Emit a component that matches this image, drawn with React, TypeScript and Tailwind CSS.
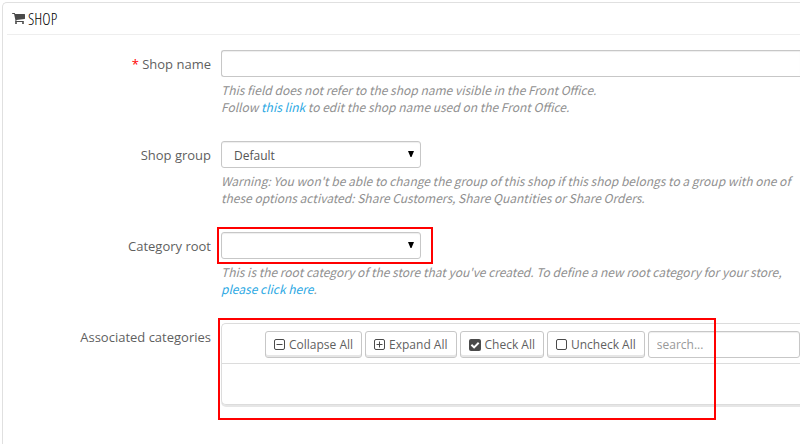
import React from "react";

type FormRowProps = {
  id: string;
  label: string;
  required?: boolean;
  children: React.ReactNode;
};

function FormRow({ id, label, required, children }: FormRowProps) {
  return (
    <div className="flex items-start gap-[10px]">
      <label htmlFor={id} className="w-[204px] shrink-0 text-right text-[13px] leading-[29px]">
        {required && <span className="text-[#f00]">* </span>}
        {label}
      </label>
      <div className="min-w-0 flex-1">{children}</div>
    </div>
  );
}

function Help({ children }: { children: React.ReactNode }) {
  return (
    <p className="mt-1 font-['Noto_Sans_CJK_SC','Open_Sans',sans-serif] text-[12px] italic leading-[17px] text-[#909090]">
      {children}
    </p>
  );
}

function Select({ id, children }: { id: string; children?: React.ReactNode }) {
  return (
    <div className="relative w-[200px]">
      <select
        id={id}
        className="block h-[27px] w-full appearance-none rounded-[3px] border border-[#c7c7c7] bg-white pl-3 pr-6 pt-[2px] text-[12px] text-[#555] shadow-[inset_0_1px_1px_rgba(0,0,0,0.07)]"
      >
        {children}
      </select>
      <svg viewBox="0 0 6 6" className="pointer-events-none absolute right-[7px] top-[10px] size-[6px]" aria-hidden="true">
        <path d="M0 0h6L3.5 6h-1z" fill="#000" />
      </svg>
    </div>
  );
}

function CartIcon() {
  return (
    <svg viewBox="64 256 1664 1408" className="h-[11px] w-[13px]" fill="#4a4a4a" aria-hidden="true">
      <path d="M704 1536q0 52-38 90t-90 38-90-38-38-90 38-90 90-38 90 38 38 90zm896 0q0 52-38 90t-90 38-90-38-38-90 38-90 90-38 90 38 38 90zm128-1088v512q0 24-16.5 42.5t-40.5 21.5l-1044 122q13 60 13 70 0 16-24 64h920q26 0 45 19t19 45-19 45-45 19h-1024q-26 0-45-19t-19-45q0-11 8-31.5t16-36 21.5-40 15.5-29.5l-177-823h-204q-26 0-45-19t-19-45 19-45 45-19h256q16 0 28.5 6.5t19.5 15.5 13 24.5 8 26 5.5 29.5 4.5 26h1201q26 0 45 19t19 45z" />
    </svg>
  );
}

type BoxKind = "minus" | "plus" | "checked" | "empty";

function BoxIcon({ kind }: { kind: BoxKind }) {
  if (kind === "checked") {
    return (
      <svg viewBox="0 0 12 12" className="size-[12px]" aria-hidden="true">
        <rect width="12" height="12" rx="2" fill="#4a4a4a" />
        <path d="M2.4 5.8l2.7 2.6 4.6-4.6" fill="none" stroke="#fff" strokeWidth="2" />
      </svg>
    );
  }
  return (
    <svg viewBox="0 0 11 11" className="size-[11px]" fill="none" stroke="#4a4a4a" aria-hidden="true">
      <rect x="0.5" y="0.5" width="10" height="10" rx="1.5" />
      {kind !== "empty" && <path d="M2.5 5.5h6" />}
      {kind === "plus" && <path d="M5.5 2.5v6" />}
    </svg>
  );
}

const treeActions: { kind: BoxKind; label: string }[] = [
  { kind: "minus", label: "Collapse All" },
  { kind: "plus", label: "Expand All" },
  { kind: "checked", label: "Check All" },
  { kind: "empty", label: "Uncheck All" },
];

function CategoryTree() {
  return (
    <div className="rounded-l-[5px] border border-r-0 border-[#dcdcdc] shadow-[0_2px_0_#e6e6e6]">
      <div className="flex gap-[3px] border-b border-[#dcdcdc] pb-[5px] pl-[43px] pt-[7px]">
        {treeActions.map((a) => (
          <button
            key={a.label}
            type="button"
            className="flex h-[27px] shrink-0 items-center gap-1 whitespace-nowrap rounded-[3px] border border-[#c7c7c7] bg-white px-2 text-[12px] shadow-[inset_0_-2px_0_#e6e6e6]"
          >
            <BoxIcon kind={a.kind} />
            {a.label}
          </button>
        ))}
        <input
          id="categories"
          type="text"
          placeholder="search..."
          className="h-[27px] min-w-0 flex-1 rounded-[3px] border border-[#c7c7c7] px-2 text-[12px] shadow-[inset_0_1px_1px_rgba(0,0,0,0.07)] placeholder:text-[#999]"
        />
      </div>
      <div className="h-10" />
    </div>
  );
}

export default function App() {
  return (
    <div className="min-h-screen overflow-x-hidden bg-white pl-[2px] pt-[2px] font-['Open_Sans',sans-serif] text-[#5f5f5f]">
      <form className="min-h-[442px] rounded-tl-[5px] border-l border-t border-[#e0e0e0] pl-1">
        <h3 className="flex h-8 items-center gap-[3px] border-b border-[#eee] pl-[5px] font-['Open_Sans_Condensed_Light','Open_Sans_Condensed',sans-serif] text-[16px] leading-[16px] text-black">
          <CartIcon />
          SHOP
        </h3>

        <div className="flex flex-col gap-[26px] pt-[15px]">
          <FormRow id="name" label="Shop name" required>
            <input
              id="name"
              type="text"
              className="block h-[27px] w-full rounded-l-[3px] border border-r-0 border-[#c7c7c7] px-2 text-[12px] shadow-[inset_0_1px_1px_rgba(0,0,0,0.07)]"
            />
            <Help>
              This field does not refer to the shop name visible in the Front Office.
              <br />
              Follow <a href="#seo" className="text-[#2ba8e3]">this link</a> to edit the shop name used on the Front Office.
            </Help>
          </FormRow>

          <FormRow id="group" label="Shop group">
            <Select id="group">
              <option>Default</option>
            </Select>
            <Help>
              Warning: You won't be able to change the group of this shop if this shop belongs to a group with one of
              these options activated: Share Customers, Share Quantities or Share Orders.
            </Help>
          </FormRow>

          <FormRow id="root-category" label="Category root">
            <div className="relative w-[200px]">
              <Select id="root-category" />
              <div className="pointer-events-none absolute -bottom-[5px] -left-1 -right-3 -top-[5px] border-2 border-[#f00]" />
            </div>
            <Help>
              This is the root category of the store that you've created. To define a new root category for your store,
              <br />
              <a href="#categories" className="text-[#2ba8e3]">please click here</a>.
            </Help>
          </FormRow>

          <FormRow id="categories" label="Associated categories">
            <div className="relative">
              <CategoryTree />
              <div className="pointer-events-none absolute -left-[3px] -top-[5px] h-[102px] w-[498px] border-2 border-[#f00]" />
            </div>
          </FormRow>
        </div>
      </form>
    </div>
  );
}
